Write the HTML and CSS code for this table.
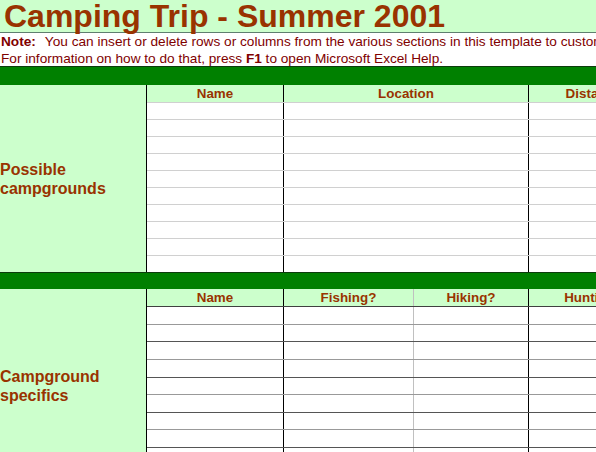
FILE: index.html
```html
<!DOCTYPE html>
<html>
<head>
<meta charset="utf-8">
<title>Camping Trip - Summer 2001</title>
<link rel="stylesheet" href="styles.css">
</head>
<body>
<div class="sheet">
  <h1 class="title">Camping Trip - Summer 2001</h1>
  <div class="note">
    <p class="note-line"><b>Note:</b><span class="gap"></span>You can insert or delete rows or columns from the various sections in this template to customize it.</p>
    <p class="note-line">For information on how to do that, press <b>F1</b> to open Microsoft Excel Help.</p>
  </div>

  <div class="band band-first"></div>
  <section class="sec sec-camp">
    <div class="label"><span>Possible<br>campgrounds</span></div>
    <div class="table">
      <div class="hrow">
        <div class="c w-name">Name</div>
        <div class="c w-loc">Location</div>
        <div class="c w-dist">Distance</div>
      </div>
      <div class="row"><div class="c w-name"></div><div class="c w-loc"></div><div class="c w-dist"></div></div>
      <div class="row"><div class="c w-name"></div><div class="c w-loc"></div><div class="c w-dist"></div></div>
      <div class="row"><div class="c w-name"></div><div class="c w-loc"></div><div class="c w-dist"></div></div>
      <div class="row"><div class="c w-name"></div><div class="c w-loc"></div><div class="c w-dist"></div></div>
      <div class="row"><div class="c w-name"></div><div class="c w-loc"></div><div class="c w-dist"></div></div>
      <div class="row"><div class="c w-name"></div><div class="c w-loc"></div><div class="c w-dist"></div></div>
      <div class="row"><div class="c w-name"></div><div class="c w-loc"></div><div class="c w-dist"></div></div>
      <div class="row"><div class="c w-name"></div><div class="c w-loc"></div><div class="c w-dist"></div></div>
      <div class="row"><div class="c w-name"></div><div class="c w-loc"></div><div class="c w-dist"></div></div>
      <div class="row row-last"><div class="c w-name"></div><div class="c w-loc"></div><div class="c w-dist"></div></div>
    </div>
  </section>

  <div class="band band-second"></div>
  <section class="sec sec-spec">
    <div class="label"><span>Campground<br>specifics</span></div>
    <div class="table">
      <div class="hrow">
        <div class="c w-name">Name</div>
        <div class="c w-fish">Fishing?</div>
        <div class="c w-hike">Hiking?</div>
        <div class="c w-hunt">Hunting?</div>
      </div>
      <div class="row"><div class="c w-name"></div><div class="c w-fish"></div><div class="c w-hike"></div><div class="c w-hunt"></div></div>
      <div class="row"><div class="c w-name"></div><div class="c w-fish"></div><div class="c w-hike"></div><div class="c w-hunt"></div></div>
      <div class="row"><div class="c w-name"></div><div class="c w-fish"></div><div class="c w-hike"></div><div class="c w-hunt"></div></div>
      <div class="row"><div class="c w-name"></div><div class="c w-fish"></div><div class="c w-hike"></div><div class="c w-hunt"></div></div>
      <div class="row"><div class="c w-name"></div><div class="c w-fish"></div><div class="c w-hike"></div><div class="c w-hunt"></div></div>
      <div class="row"><div class="c w-name"></div><div class="c w-fish"></div><div class="c w-hike"></div><div class="c w-hunt"></div></div>
      <div class="row"><div class="c w-name"></div><div class="c w-fish"></div><div class="c w-hike"></div><div class="c w-hunt"></div></div>
      <div class="row"><div class="c w-name"></div><div class="c w-fish"></div><div class="c w-hike"></div><div class="c w-hunt"></div></div>
      <div class="row"><div class="c w-name"></div><div class="c w-fish"></div><div class="c w-hike"></div><div class="c w-hunt"></div></div>
      <div class="row"><div class="c w-name"></div><div class="c w-fish"></div><div class="c w-hike"></div><div class="c w-hunt"></div></div>
    </div>
  </section>
</div>
</body>
</html>
```
FILE: styles.css
```css
* { box-sizing: border-box; }

html, body {
  margin: 0;
  padding: 0;
  background: #ffffff;
}

body {
  width: 596px;
  height: 452px;
  overflow: hidden;
  font-family: "Liberation Sans", Arial, sans-serif;
  color: #993300;
}

.sheet {
  width: 800px;
}

.title {
  margin: 0;
  height: 33px;
  padding-left: 4px;
  background: #ccffcc;
  border-bottom: 1px solid #5f7f6f;
  font-size: 32px;
  line-height: 32px;
  font-weight: bold;
  color: #993300;
  white-space: nowrap;
}

.note {
  background: #ffffff;
  color: #800000;
  font-size: 13.65px;
  height: 33px;
}

.note-line {
  margin: 0;
  padding-left: 1px;
  height: 17px;
  line-height: 17px;
  white-space: nowrap;
}

.note-line + .note-line {
  height: 16px;
}

.gap {
  display: inline-block;
  width: 9px;
}

.band {
  background: #008000;
  border-top: 1px solid #0d3b0d;
}

.band-first { height: 19px; }
.band-second { height: 17px; }

.sec {
  display: flex;
}

.label {
  width: 147px;
  flex: none;
  background: #ccffcc;
  border-right: 1px solid #000000;
  display: flex;
  align-items: center;
  font-size: 16px;
  line-height: 19px;
  font-weight: bold;
  color: #993300;
  white-space: nowrap;
}

.sec-spec .label {
  height: 193px;
}

.table {
  display: flex;
  flex-direction: column;
}

.hrow, .row {
  display: flex;
}

.hrow {
  height: 18px;
  background: #ccffcc;
  font-size: 13.4px;
  font-weight: bold;
  line-height: 17px;
  text-align: center;
  white-space: nowrap;
}

.row {
  height: 17px;
  background: #ffffff;
}

.c {
  flex: none;
  height: 100%;
  border-right: 1px solid #000000;
}

.w-name { width: 137px; }
.w-loc { width: 245px; }
.w-dist { width: 130px; }
.w-fish { width: 130px; border-right-color: #c0c0c0; }
.w-hike { width: 115px; }
.w-hunt { width: 130px; }

/* section 1: light grid lines */
.sec-camp .hrow,
.sec-camp .row {
  border-bottom: 1px solid #d0d0d0;
}

.sec-camp .row-last {
  height: 16px;
  border-bottom: 0;
}

/* section 2: darker alternating lines */
.sec-spec .hrow {
  border-bottom: 1px solid #404040;
}

.sec-spec .row {
  height: 17.625px;
  border-bottom: 1px solid #999999;
}

.sec-spec .row:nth-child(odd) {
  border-bottom-color: #555555;
}
```
